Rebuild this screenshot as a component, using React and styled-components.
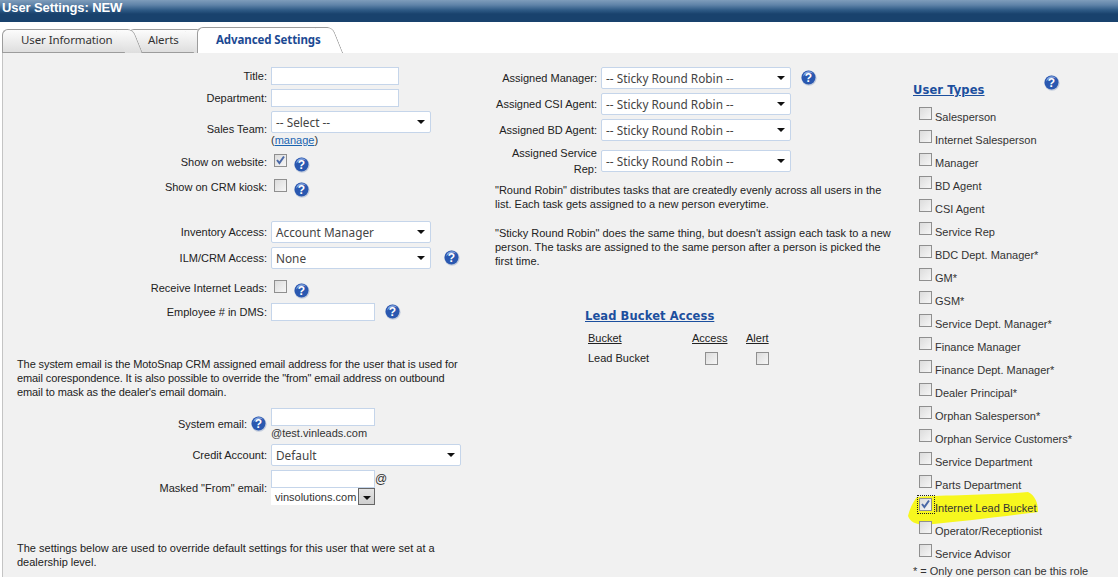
import React from 'react';
import styled, { createGlobalStyle } from 'styled-components';

const GlobalStyle = createGlobalStyle`
  html, body {
    margin: 0;
    padding: 0;
    height: 577px;
    overflow: hidden;
    background: #fff;
    font-family: "Liberation Sans", Arial, sans-serif;
    font-size: 11px;
    color: #222;
  }
`;

const TitleBar = styled.div`
  height: 22px;
  padding-left: 2px;
  box-sizing: border-box;
  background: linear-gradient(#7f9dbb 0, #5f83a8 5px, #2f5b86 10px, #19426d 14px, #19426d 100%);
  color: #fff;
  font-size: 13px;
  font-weight: bold;
  letter-spacing: -0.1px;
  line-height: 16px;
`;

const TabBar = styled.div`
  display: flex;
  height: 31px;
  padding: 5px 0 0 2px;
  box-sizing: border-box;
  background: #fff;
  align-items: flex-end;
`;

const Tab = styled.div`
  position: relative;
  z-index: ${(p) => p.$z};
  width: ${(p) => p.$w}px;
  height: ${(p) => (p.$active ? 26 : 24)}px;
  box-sizing: border-box;
  padding-left: ${(p) => p.$pad}px;
  border: 1px solid #9c9c9c;
  border-right: 0;
  border-bottom: ${(p) => (p.$active ? 0 : '1px solid #9c9c9c')};
  border-top-left-radius: 6px;
  background: ${(p) => (p.$active ? '#fff' : 'linear-gradient(#fcfcfc, #dedede)')};
  color: ${(p) => (p.$active ? '#1c4a93' : '#333')};
  font-family: "Noto Sans", sans-serif;
  font-size: 11.5px;
  font-weight: ${(p) => (p.$active ? 'bold' : 'normal')};
  letter-spacing: -0.1px;
  line-height: ${(p) => (p.$active ? 24 : 20)}px;

  &::after {
    content: '';
    position: absolute;
    top: -1px;
    bottom: ${(p) => (p.$active ? 0 : '-1px')};
    right: -10px;
    width: 18px;
    box-sizing: border-box;
    border-top: 1px solid #9c9c9c;
    border-right: 1px solid #9c9c9c;
    border-top-right-radius: 6px;
    background: ${(p) => (p.$active ? '#fff' : 'linear-gradient(#fcfcfc, #dedede)')};
    transform: skewX(22deg);
    z-index: -1;
  }
`;

const Panel = styled.div`
  display: grid;
  grid-template-columns: 482px 416px 1fr;
  margin-left: 2px;
  height: 524px;
  box-sizing: border-box;
  border-left: 1px solid #c4c4c4;
  background: #f1f1f1;
  overflow: hidden;
`;

const LeftColumn = styled.div`
  padding-top: 14px;
`;

const MiddleColumn = styled.div`
  padding-top: 14px;
`;

const RightColumn = styled.div`
  padding: 22px 0 0 12px;
`;

const Row = styled.div`
  display: grid;
  grid-template-columns: ${(p) => p.$label || 264}px 1fr;
  column-gap: 4px;
  align-items: center;
  margin-top: ${(p) => p.$mt || 0}px;
  min-height: ${(p) => p.$h || 0}px;
`;

const Label = styled.div`
  display: flex;
  justify-content: flex-end;
  align-items: center;
  gap: 4px;
  text-align: right;
  line-height: 16px;
  padding-left: ${(p) => p.$indent || 0}px;
`;

const Control = styled.div`
  display: flex;
  align-items: center;
  min-width: 0;
`;

const Stack = styled.div`
  display: flex;
  flex-direction: column;
`;

const TextInput = styled.div`
  width: ${(p) => p.$w}px;
  height: 18px;
  flex: none;
  box-sizing: border-box;
  border: 1px solid #c5d5ea;
  background: #fff;
`;

const SelectBox = styled.div`
  display: flex;
  align-items: center;
  justify-content: space-between;
  width: ${(p) => p.$w}px;
  height: 22px;
  flex: none;
  box-sizing: border-box;
  padding: 0 5px 0 4px;
  border: 1px solid #c5d5ea;
  border-radius: 2px;
  background: #fff;
  color: #444;
  font-family: "Noto Sans", sans-serif;
  font-size: 11.8px;
`;

const Arrow = styled.span`
  width: 0;
  height: 0;
  flex: none;
  border-left: 4px solid transparent;
  border-right: 4px solid transparent;
  border-top: 4px solid #111;
`;

const MiniSelect = styled.div`
  display: flex;
  align-items: center;
  justify-content: space-between;
  width: 104px;
  height: 17px;
  box-sizing: border-box;
  padding-left: 4px;
  background: #fff;
  color: #333;
  font-size: 11px;
`;

const MiniButton = styled.span`
  display: flex;
  align-items: center;
  justify-content: center;
  flex: none;
  width: 17px;
  height: 17px;
  box-sizing: border-box;
  border: 1px solid #666;
  background: linear-gradient(#e4e4e4, #cfcfcf);

  ${Arrow} {
    margin-top: 3px;
  }
`;

const Box = styled.span`
  display: flex;
  align-items: center;
  justify-content: center;
  flex: none;
  width: 13px;
  height: 13px;
  box-sizing: border-box;
  border: 1px solid #8f8f8f;
  background: linear-gradient(135deg, #dcdcdc, #f6f6f6);
  margin-left: ${(p) => p.$ml || 0}px;
  transform: translateY(${(p) => p.$lift || 0}px);
`;

const Manage = styled.div`
  line-height: 14px;
  color: #333;

  a {
    color: #1a64b0;
    text-decoration: underline;
  }
`;

const Paragraph = styled.p`
  margin: ${(p) => p.$mt || 0}px 0 0 ${(p) => p.$ml}px;
  width: ${(p) => p.$w}px;
  line-height: 14px;
  letter-spacing: ${(p) => p.$ls || 0}px;
`;

const Suffix = styled.div`
  line-height: 14px;
  color: #333;
  font-size: ${(p) => p.$size || 11}px;
`;

const HelpWrap = styled.span`
  display: inline-flex;
  flex: none;
  margin-left: ${(p) => p.$ml || 0}px;
  transform: translateY(${(p) => p.$drop || 0}px);
`;

const SectionTitle = styled.a`
  color: #1c4f9e;
  font-family: "DejaVu Sans", sans-serif;
  font-size: 11.5px;
  font-weight: bold;
  letter-spacing: 0.1px;
  text-decoration: underline;
`;

const BucketSection = styled.div`
  margin: 40px 0 0 100px;
  line-height: 16px;
`;

const BucketTable = styled.div`
  display: grid;
  grid-template-columns: 88px 38px 23px;
  column-gap: 16px;
  grid-auto-rows: 20px;
  align-items: center;
  margin: 4px 0 0 3px;
`;

const HeadCell = styled.div`
  text-decoration: underline;
  color: #222;
`;

const CheckCell = styled.div`
  display: flex;
  justify-content: ${(p) => p.$justify || 'center'};
`;

const TypesHeader = styled.div`
  display: flex;
  justify-content: space-between;
  width: 147px;
  height: 24px;
  align-items: flex-start;
  ${SectionTitle} {
    margin-top: 8px;
  }
`;

const TypesList = styled.div`
  display: flex;
  flex-direction: column;
  margin-top: 6px;
`;

const TypeItem = styled.div`
  position: relative;
  display: flex;
  align-items: center;
  gap: 3px;
  height: 23px;
  padding-left: 6px;
  color: #333;
`;

const TypeText = styled.span`
  position: relative;
`;

const Highlight = styled.svg`
  position: absolute;
  left: -5px;
  top: -4px;
`;

const FocusRing = styled.span`
  position: absolute;
  left: 4px;
  top: -1px;
  width: 18px;
  height: 19px;
  box-sizing: border-box;
  border: 1px dotted #222;
`;

const Note = styled.div`
  margin-top: -1px;
  line-height: 14px;
  color: #333;
`;

const Help = () => (
  <svg width="16" height="16" viewBox="0 0 16 16">
    <circle cx="8" cy="8.2" r="7.6" fill="#c3ccdc" />
    <circle cx="7.5" cy="7.5" r="7" fill="#2a58b0" />
    <path d="M2.2 6.5a5.6 5.6 0 0 1 10 -3a8 8 0 0 0 -10 3z" fill="#86a4de" />
    <text x="7.5" y="12" fontSize="12" fontWeight="bold" fontFamily="Liberation Sans" textAnchor="middle" fill="#fff">?</text>
  </svg>
);

const Check = ({ checked, lift, ml }) => (
  <Box $lift={lift} $ml={ml}>
    {checked && (
      <svg width="11" height="11" viewBox="0 0 11 11">
        <path d="M2 5l2.4 3L9 1.5" fill="none" stroke="#4a68a6" strokeWidth="2" />
      </svg>
    )}
  </Box>
);

const userTypes = [
  'Salesperson',
  'Internet Salesperson',
  'Manager',
  'BD Agent',
  'CSI Agent',
  'Service Rep',
  'BDC Dept. Manager*',
  'GM*',
  'GSM*',
  'Service Dept. Manager*',
  'Finance Manager',
  'Finance Dept. Manager*',
  'Dealer Principal*',
  'Orphan Salesperson*',
  'Orphan Service Customers*',
  'Service Department',
  'Parts Department',
  'Internet Lead Bucket',
  'Operator/Receptionist',
  'Service Advisor',
];

const assigned = [
  { label: 'Assigned Manager:', mt: 0, help: true },
  { label: 'Assigned CSI Agent:', mt: 4 },
  { label: 'Assigned BD Agent:', mt: 4 },
  { label: 'Assigned Service Rep:', mt: 4, indent: 20 },
];

const App = () => (
  <>
    <GlobalStyle />
    <TitleBar>User Settings: NEW</TitleBar>
    <TabBar>
      <Tab $w={126} $pad={18} $z={3}>User Information</Tab>
      <Tab $w={69} $pad={19} $z={2}>Alerts</Tab>
      <Tab $w={131} $pad={18} $z={4} $active>Advanced Settings</Tab>
    </TabBar>
    <Panel>
      <LeftColumn>
        <Row>
          <Label>Title:</Label>
          <Control><TextInput $w={128} /></Control>
        </Row>
        <Row $mt={4}>
          <Label>Department:</Label>
          <Control><TextInput $w={128} /></Control>
        </Row>
        <Row $mt={4}>
          <Label>Sales Team:</Label>
          <Stack>
            <SelectBox $w={160}>-- Select --<Arrow /></SelectBox>
            <Manage>(<a href="#manage">manage</a>)</Manage>
          </Stack>
        </Row>
        <Row $mt={5} $h={20}>
          <Label>Show on website:</Label>
          <Control>
            <Check checked lift={-2} ml={3} />
            <HelpWrap $ml={7} $drop={3}><Help /></HelpWrap>
          </Control>
        </Row>
        <Row $mt={5} $h={20}>
          <Label>Show on CRM kiosk:</Label>
          <Control>
            <Check lift={-2} ml={3} />
            <HelpWrap $ml={7} $drop={3}><Help /></HelpWrap>
          </Control>
        </Row>
        <Row $mt={24}>
          <Label>Inventory Access:</Label>
          <Control><SelectBox $w={160}>Account Manager<Arrow /></SelectBox></Control>
        </Row>
        <Row $mt={4}>
          <Label>ILM/CRM Access:</Label>
          <Control>
            <SelectBox $w={160}>None<Arrow /></SelectBox>
            <HelpWrap $ml={13}><Help /></HelpWrap>
          </Control>
        </Row>
        <Row $mt={9} $h={20}>
          <Label>Receive Internet Leads:</Label>
          <Control>
            <Check lift={-2} ml={3} />
            <HelpWrap $ml={7} $drop={3}><Help /></HelpWrap>
          </Control>
        </Row>
        <Row $mt={5}>
          <Label>Employee # in DMS:</Label>
          <Control>
            <TextInput $w={104} />
            <HelpWrap $ml={10}><Help /></HelpWrap>
          </Control>
        </Row>
        <Paragraph $mt={36} $ml={14} $w={455} $ls={-0.1}>
          The system email is the MotoSnap CRM assigned email address for the user that is used for
          email corespondence. It is also possible to override the "from" email address on outbound
          email to mask as the dealer's email domain.
        </Paragraph>
        <Row $mt={9}>
          <Label>System email:<Help /></Label>
          <Stack>
            <TextInput $w={104} />
            <Suffix>@test.vinleads.com</Suffix>
          </Stack>
        </Row>
        <Row $mt={4}>
          <Label>Credit Account:</Label>
          <Control><SelectBox $w={190}>Default<Arrow /></SelectBox></Control>
        </Row>
        <Row $mt={4}>
          <Label>Masked "From" email:</Label>
          <Stack>
            <Control>
              <TextInput $w={104} />
              <Suffix $size={12}>@</Suffix>
            </Control>
            <MiniSelect>vinsolutions.com<MiniButton><Arrow /></MiniButton></MiniSelect>
          </Stack>
        </Row>
        <Paragraph $mt={36} $ml={14} $w={455}>
          The settings below are used to override default settings for this user that were set at a
          dealership level.
        </Paragraph>
      </LeftColumn>

      <MiddleColumn>
        {assigned.map((item) => (
          <Row key={item.label} $label={112} $mt={item.mt}>
            <Label $indent={item.indent}>{item.label}</Label>
            <Control>
              <SelectBox $w={190}>-- Sticky Round Robin --<Arrow /></SelectBox>
              {item.help && <HelpWrap $ml={10}><Help /></HelpWrap>}
            </Control>
          </Row>
        ))}
        <Paragraph $mt={6} $ml={10} $w={396}>
          "Round Robin" distributes tasks that are createdly evenly across all users in the
          list. Each task gets assigned to a new person everytime.
        </Paragraph>
        <Paragraph $mt={15} $ml={10} $w={396}>
          "Sticky Round Robin" does the same thing, but doesn't assign each task to a new
          person. The tasks are assigned to the same person after a person is picked the
          first time.
        </Paragraph>
        <BucketSection>
          <SectionTitle href="#bucket">Lead Bucket Access</SectionTitle>
          <BucketTable>
            <HeadCell>Bucket</HeadCell>
            <HeadCell>Access</HeadCell>
            <HeadCell>Alert</HeadCell>
            <div>Lead Bucket</div>
            <CheckCell><Check /></CheckCell>
            <CheckCell $justify="flex-end"><Check /></CheckCell>
          </BucketTable>
        </BucketSection>
      </MiddleColumn>

      <RightColumn>
        <TypesHeader>
          <SectionTitle href="#types">User Types</SectionTitle>
          <Help />
        </TypesHeader>
        <TypesList>
          {userTypes.map((name) => {
            const picked = name === 'Internet Lead Bucket';
            return (
              <TypeItem key={name}>
                {picked && (
                  <Highlight width="132" height="36" viewBox="0 0 132 36">
                    <path
                      d="M9 5C40 3 90 3 120 0C128 4 130 12 130 20C100 24 50 30 15 33C8 32 2 30 0 24C2 16 5 10 9 5z"
                      fill="#f7f71e"
                    />
                  </Highlight>
                )}
                {picked && <FocusRing />}
                <TypeText><Check checked={picked} lift={-3} /></TypeText>
                <TypeText>{name}</TypeText>
              </TypeItem>
            );
          })}
        </TypesList>
        <Note>* = Only one person can be this role</Note>
      </RightColumn>
    </Panel>
  </>
);

export default App;
